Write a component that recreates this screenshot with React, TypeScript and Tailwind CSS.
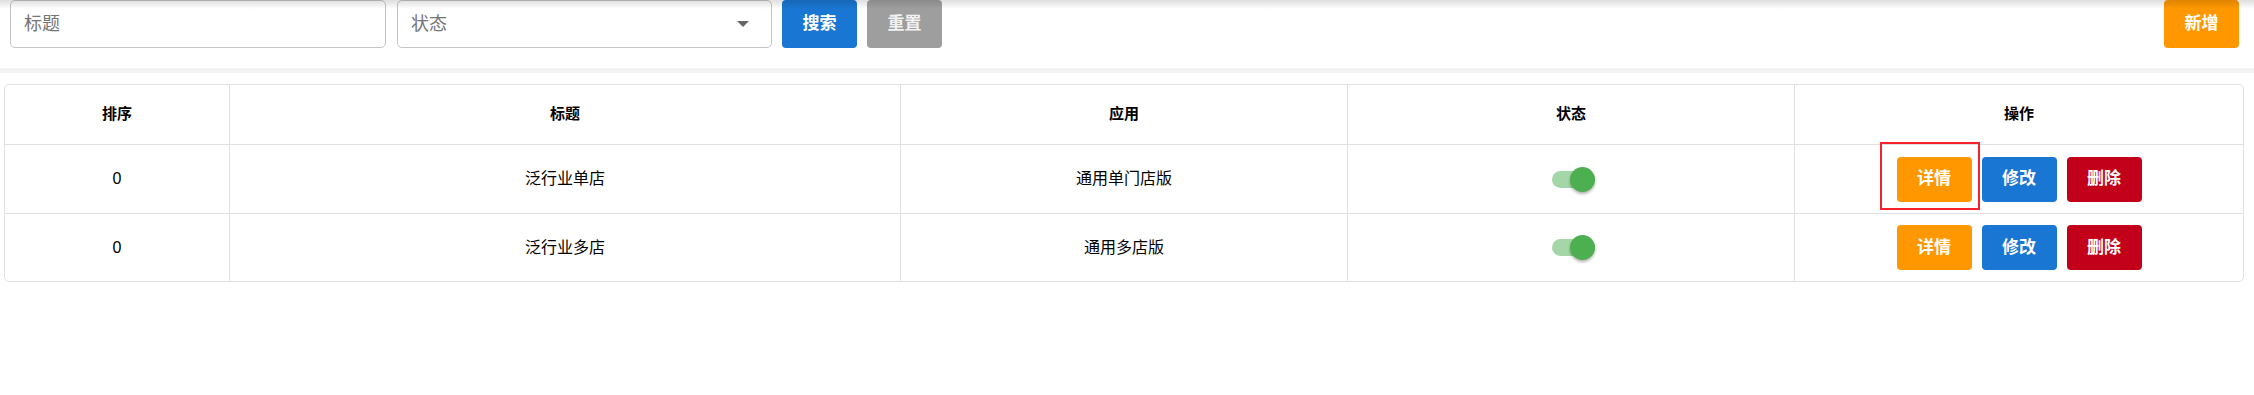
import React from "react";

const rows = [
  { sort: "0", title: "泛行业单店", app: "通用单门店版", mark: true },
  { sort: "0", title: "泛行业多店", app: "通用多店版", mark: false },
];

function Toggle() {
  return (
    <div className="relative w-[43px] h-[17px] ml-[4px]">
      <div className="w-[43px] h-[17px] rounded-full bg-[#a5d6a7]" />
      <div className="absolute right-0 top-[-4px] w-[25px] h-[25px] rounded-full bg-[#4caf50] shadow-[0_2px_3px_rgba(0,0,0,0.3)]" />
    </div>
  );
}

export default function App() {
  return (
    <div
      className="relative w-[2254px] h-[395px] bg-white overflow-hidden"
      style={{ fontFamily: '"Liberation Sans", "Noto Sans CJK SC", sans-serif' }}
    >
      <div className="pointer-events-none absolute inset-x-0 top-0 h-[9px] bg-gradient-to-b from-[rgba(0,0,0,0.13)] to-transparent z-10" />
      <div className="flex items-start h-[68px] pl-[10px] pr-[15px]">
        <div className="w-[376px] h-[48px] border border-[#c4c4c4] rounded-[5px] flex items-center pl-[13px] text-[18px] text-[#757575]">
          标题
        </div>
        <div className="ml-[11px] w-[375px] h-[48px] border border-[#c4c4c4] rounded-[5px] flex items-center pl-[13px] pr-[22px] text-[18px] text-[#757575]">
          <span className="flex-1">状态</span>
          <span className="w-0 h-0 border-l-[6px] border-r-[6px] border-t-[6px] border-l-transparent border-r-transparent border-t-[#666]" />
        </div>
        <button className="ml-[10px] w-[75px] h-[48px] rounded-[4px] bg-[#1976d2] text-white text-[17px] font-bold">
          搜索
        </button>
        <button className="ml-[10px] w-[75px] h-[48px] rounded-[4px] bg-[#9e9e9e] text-[#f2f2f2] text-[17px] font-bold">
          重置
        </button>
        <button className="ml-auto w-[75px] h-[48px] rounded-[4px] bg-[#ff9800] text-white text-[17px] font-bold">
          新增
        </button>
      </div>
      <div className="h-[5px] bg-[#f3f3f3]" />
      <div className="pt-[11px] pl-[4px]">
        <div className="w-[2240px] border border-[#e0e0e0] rounded-[5px] text-black">
          <div className="grid grid-cols-[225px_671px_447px_447px_1fr] h-[60px] border-b border-[#e0e0e0] text-[15px] font-bold">
            <div className="flex items-center justify-center border-r border-[#e0e0e0]">排序</div>
            <div className="flex items-center justify-center border-r border-[#e0e0e0]">标题</div>
            <div className="flex items-center justify-center border-r border-[#e0e0e0]">应用</div>
            <div className="flex items-center justify-center border-r border-[#e0e0e0]">状态</div>
            <div className="flex items-center justify-center">操作</div>
          </div>
          {rows.map((r, i) => (
            <div
              key={i}
              className={
                i === 0
                  ? "grid grid-cols-[225px_671px_447px_447px_1fr] h-[69px] border-b border-[#e0e0e0] text-[16px]"
                  : "grid grid-cols-[225px_671px_447px_447px_1fr] h-[67px] text-[16px]"
              }
            >
              <div className="flex items-center justify-center border-r border-[#e0e0e0]">{r.sort}</div>
              <div className="flex items-center justify-center border-r border-[#e0e0e0]">{r.title}</div>
              <div className="flex items-center justify-center border-r border-[#e0e0e0]">{r.app}</div>
              <div className="flex items-center justify-center border-r border-[#e0e0e0]">
                <Toggle />
              </div>
              <div className="flex items-center justify-center gap-[10px]">
                <div className="relative">
                  <button className="w-[75px] h-[45px] rounded-[4px] bg-[#ff9800] text-white text-[17px] font-bold">
                    详情
                  </button>
                  {r.mark && (
                    <div className="pointer-events-none absolute left-[-17px] top-[-15px] w-[100px] h-[68px] border-2 border-[#f5222d]" />
                  )}
                </div>
                <button className="w-[75px] h-[45px] rounded-[4px] bg-[#1976d2] text-white text-[17px] font-bold">
                  修改
                </button>
                <button className="w-[75px] h-[45px] rounded-[4px] bg-[#c2001a] text-white text-[17px] font-bold">
                  删除
                </button>
              </div>
            </div>
          ))}
        </div>
      </div>
    </div>
  );
}
